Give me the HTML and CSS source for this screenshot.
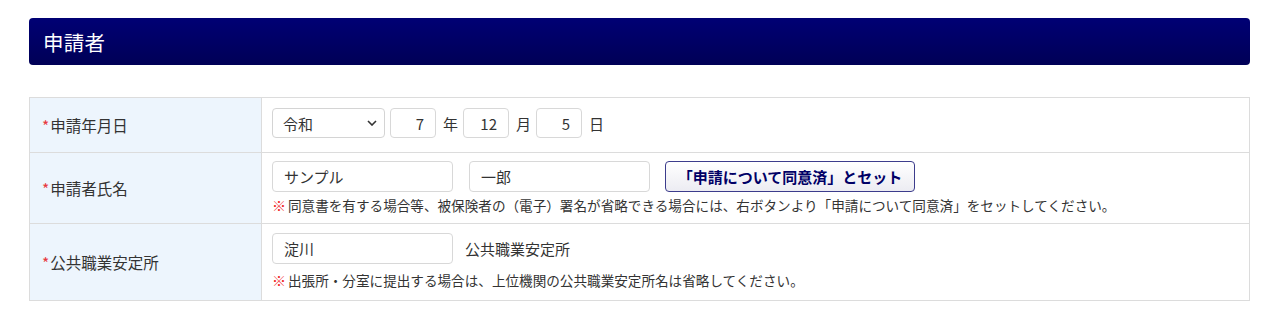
FILE: index.html
```html
<!DOCTYPE html>
<html lang="ja">
<head>
<meta charset="utf-8">
<link rel="stylesheet" href="styles.css">
</head>
<body>
<div class="page">
  <h2 class="section-title">申請者</h2>
  <table class="form-table">
    <tr class="row-date">
      <th><span class="req">*</span>申請年月日</th>
      <td>
        <div class="line">
          <div class="select-wrap">
            <select class="era"><option>令和</option></select>
            <svg class="chev" width="10" height="6" viewBox="0 0 10 6"><path d="M1 1l4 4 4-4" fill="none" stroke="#333" stroke-width="1.6"/></svg>
          </div>
          <input class="num" value="7"><span class="unit">年</span>
          <input class="num" value="12"><span class="unit">月</span>
          <input class="num" value="5"><span class="unit">日</span>
        </div>
      </td>
    </tr>
    <tr class="row-name">
      <th><span class="req">*</span>申請者氏名</th>
      <td>
        <div class="line">
          <input class="text first" value="サンプル">
          <input class="text last" value="一郎">
          <button class="set-btn">「申請について同意済」とセット</button>
        </div>
        <p class="note"><span class="mark">※</span>同意書を有する場合等、被保険者の（電子）署名が省略できる場合には、右ボタンより「申請について同意済」をセットしてください。</p>
      </td>
    </tr>
    <tr class="row-office">
      <th><span class="req">*</span>公共職業安定所</th>
      <td>
        <div class="line">
          <input class="text first" value="淀川">
          <span class="suffix">公共職業安定所</span>
        </div>
        <p class="note note-office"><span class="mark">※</span>出張所・分室に提出する場合は、上位機関の公共職業安定所名は省略してください。</p>
      </td>
    </tr>
  </table>
</div>
</body>
</html>
```

FILE: styles.css
```css
* { box-sizing: border-box; }
body {
  margin: 0;
  background: #fff;
  font-family: "Noto Sans CJK JP", "Noto Sans", sans-serif;
  color: #333;
}
.page {
  padding: 18px 30px 0 29px;
}
.section-title {
  margin: 0;
  height: 47px;
  display: flex;
  align-items: center;
  padding-left: 14px;
  background: linear-gradient(#000074, #000056);
  border-radius: 4px;
  color: #fff;
  font-size: 20.5px;
  font-weight: normal;
  letter-spacing: 0.3px;
}
.form-table {
  margin-top: 32px;
  width: 100%;
  border-collapse: collapse;
  border: 1px solid #dcdcdc;
}
.form-table th, .form-table td {
  border: 1px solid #dcdcdc;
}
.form-table th {
  width: 232px;
  background: #edf5fd;
  text-align: left;
  vertical-align: middle;
  font-weight: normal;
  font-size: 15.5px;
  padding: 0 12px;
  color: #333;
}
.req { color: #e8383d; margin-right: 1px; }
.form-table td {
  vertical-align: top;
  padding: 0 10px;
}
.row-date { height: 55px; }
.row-name { height: 71px; }
.row-office { height: 77px; }
.row-date td { padding-top: 10px; }
.row-name td { padding-top: 8px; }
.row-office td { padding-top: 9px; }
.line {
  display: flex;
  align-items: center;
}
input, select, button {
  font-family: inherit;
  color: #333;
}
.select-wrap {
  position: relative;
  width: 113px;
  height: 30px;
}
.era {
  appearance: none;
  width: 100%;
  height: 30px;
  border: 1px solid #d4d4d4;
  border-radius: 4px;
  background: #fff;
  font-size: 15px;
  padding: 0 10px;
}
.chev {
  position: absolute;
  right: 8px;
  top: 12px;
  pointer-events: none;
}
.num {
  width: 46px;
  height: 30px;
  margin-left: 5px;
  border: 1px solid #d8d8d8;
  border-radius: 4px;
  text-align: right;
  padding: 0 11px;
  font-size: 15px;
}
.unit {
  font-size: 15px;
  margin-left: 7px;
}
.text {
  width: 181px;
  height: 31px;
  border: 1px solid #d8d8d8;
  border-radius: 4px;
  padding: 0 11px;
  font-size: 15px;
}
.text.last { margin-left: 16px; }
.set-btn {
  margin-left: 15px;
  height: 31px;
  width: 250px;
  border: 1px solid #3c3c8c;
  border-radius: 4px;
  background: linear-gradient(#ffffff, #ececf2);
  color: #000066;
  font-weight: bold;
  font-size: 15px;
  padding: 0;
}
.suffix {
  margin-left: 12px;
  font-size: 15px;
}
.note {
  margin: 4px 0 0;
  font-size: 13.6px;
  line-height: 18px;
  color: #333;
}
.note-office { margin-top: 7px; }
.mark {
  color: #f01c24;
  font-weight: bold;
  font-size: 14px;
  margin-right: 2px;
}
```
